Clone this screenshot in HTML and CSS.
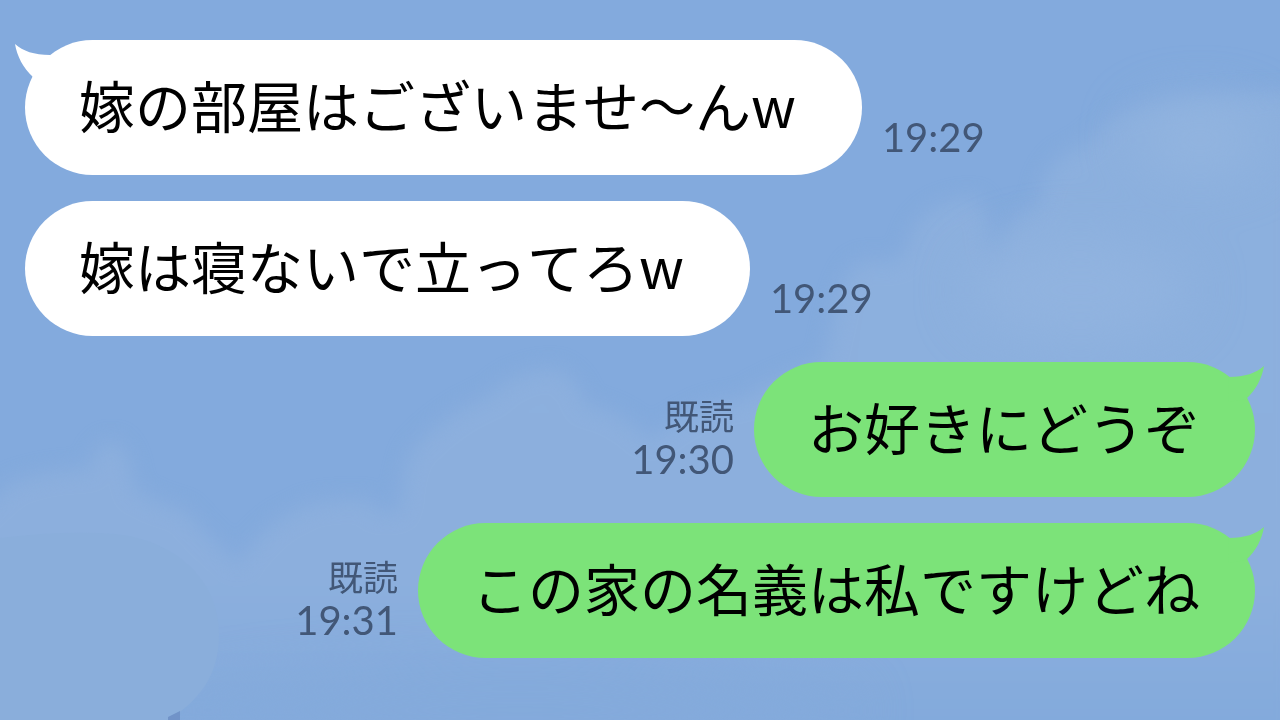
FILE: index.html
```
<!DOCTYPE html>
<html lang="ja">
<head>
<meta charset="utf-8">
<meta name="viewport" content="width=device-width, initial-scale=1">
<title>トーク</title>
<link rel="stylesheet" href="styles.css">
</head>
<body>
<svg class="sky" viewBox="0 0 1280 720" preserveAspectRatio="xMidYMid slice" aria-hidden="true">
  <defs>
    <filter id="soft" x="-10%" y="-10%" width="120%" height="120%" color-interpolation-filters="sRGB"><feGaussianBlur stdDeviation="10"/></filter>
    <filter id="haze" x="-30%" y="-30%" width="160%" height="160%" color-interpolation-filters="sRGB"><feGaussianBlur stdDeviation="26"/></filter>
    <linearGradient id="cloud" x1="0" y1="0" x2="0" y2="720" gradientUnits="userSpaceOnUse">
      <stop offset="0" stop-color="#8cb0de"/>
      <stop offset=".8" stop-color="#8cafdd"/>
      <stop offset="1" stop-color="#83aadc"/>
    </linearGradient>
  </defs>
  <rect width="1280" height="720" fill="#83aadd"/>
  <g fill="url(#cloud)" filter="url(#soft)">
    <path d="M820 380 L838 300 Q850 252 880 262 Q905 268 912 232 Q930 200 975 198 Q988 208 990 250 L996 262 Q1002 220 1040 205 Q1038 175 1064 155 Q1090 145 1110 120 Q1150 95 1300 92 V800 H820 Z"/>
    <path d="M200 740 L240 560 Q270 520 295 512 Q310 498 370 500 Q378 520 400 508 Q402 470 412 450 Q450 410 490 396 Q510 372 555 368 Q580 380 585 405 Q620 410 650 440 Q700 400 740 400 Q790 370 840 360 L900 740 Z"/>
    <path d="M-30 520 L10 484 Q50 468 90 470 Q92 448 112 440 Q132 450 134 490 Q160 505 185 510 Q205 535 235 560 Q250 600 240 740 H-30 Z"/>
  </g>
  <g filter="url(#haze)">
    <ellipse cx="1200" cy="140" rx="65" ry="35" fill="#92b4df"/>
    <ellipse cx="1080" cy="290" rx="110" ry="50" fill="#91b3df"/>
    <ellipse cx="520" cy="710" rx="340" ry="40" fill="#84aadb"/>
  </g>
  <path d="M0 538 Q65 530 115 534 C175 540 219 580 219 635 C219 675 200 700 168 720 H0 Z" fill="#8aaedb"/>
  <path d="M168 720 L168 717 L180 711 V720 Z" fill="#7193c8"/>
</svg>

<main class="chat">
  <article class="message message--in">
    <p class="bubble">嫁の部屋はございませ〜んw
      <svg class="tail" viewBox="0 0 36 36" aria-hidden="true"><path d="M0 0 C8 7 19 11 35 11 L36 36 L18 33 C8 24 2 12 0 0 Z"/></svg>
    </p>
    <div class="meta"><time>19:29</time></div>
  </article>
  <article class="message message--in">
    <p class="bubble">嫁は寝ないで立ってろw</p>
    <div class="meta"><time>19:29</time></div>
  </article>
  <article class="message message--out">
    <p class="bubble">お好きにどうぞ
      <svg class="tail" viewBox="0 0 36 36" aria-hidden="true"><path d="M36 0 C28 7 17 11 1 11 L0 36 L18 33 C28 24 34 12 36 0 Z"/></svg>
    </p>
    <div class="meta"><span class="read">既読</span><time>19:30</time></div>
  </article>
  <article class="message message--out">
    <p class="bubble">この家の名義は私ですけどね
      <svg class="tail" viewBox="0 0 36 36" aria-hidden="true"><path d="M36 0 C28 7 17 11 1 11 L0 36 L18 33 C28 24 34 12 36 0 Z"/></svg>
    </p>
    <div class="meta"><span class="read">既読</span><time>19:31</time></div>
  </article>
</main>
</body>
</html>
```
FILE: styles.css
```
* {
  box-sizing: border-box;
}

body {
  margin: 0;
  min-height: 100vh;
  background: #83aadd;
  font-family: "Noto Sans CJK JP", sans-serif;
  font-kerning: none;
}

.sky {
  position: fixed;
  inset: 0;
  z-index: -1;
  width: 100%;
  height: 100%;
}

.chat {
  display: flex;
  flex-direction: column;
  gap: 26px;
  padding: 40px 25px;
}

.message {
  display: flex;
  align-items: flex-end;
  gap: 20px;
}

.message--out {
  flex-direction: row-reverse;
}

.bubble {
  position: relative;
  margin: 0;
  padding: 24px 55px 31px 54px;
  border-radius: 68px;
  color: #000;
  font-size: 56px;
  line-height: 80px;
}

.message--in .bubble {
  padding-right: 66px;
  background: #fff;
}

.message--out .bubble {
  background: #7ce379;
}

.tail {
  position: absolute;
  top: 4px;
  width: 36px;
  height: 36px;
}

.message--in .tail {
  left: -10px;
  fill: #fff;
}

.message--out .tail {
  right: -9px;
  fill: #7ce379;
}

.meta {
  display: flex;
  flex-direction: column;
  align-items: flex-end;
  padding-bottom: 15px;
  color: #425777;
  line-height: 45px;
}

.read {
  font-size: 35px;
}

.meta time {
  font-family: Lato, sans-serif;
  font-size: 40px;
}
```
